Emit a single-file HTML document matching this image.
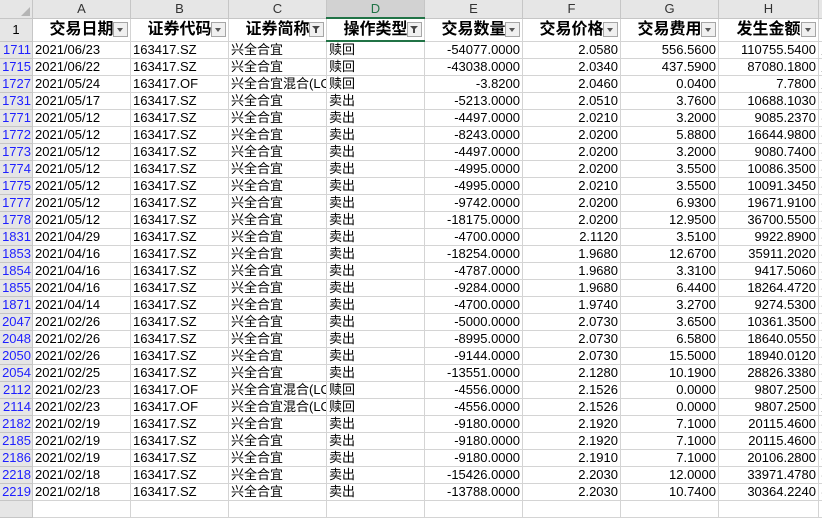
<!DOCTYPE html>
<html><head><meta charset="utf-8"><style>
body{margin:0;width:822px;height:504px;overflow:hidden;background:#fff;font-family:"Liberation Sans","Noto Sans CJK SC",sans-serif}
table{border-collapse:collapse;table-layout:fixed;position:absolute;left:-1px;top:-1px;width:839px}
td{border:1px solid #d4d4d4;padding:0 2px;font-size:13px;height:16px;line-height:16px;white-space:nowrap;overflow:hidden;color:#000}
tr.ch td{background:#e6e6e6;height:17px;text-align:center;color:#333;border-color:#c6c6c6;font-size:13px}
tr.ch td.sel{background:#d2d2d2;color:#217346;border-bottom:2px solid #217346}
tr.h td{height:21px;font-size:16px;font-weight:bold;text-align:center;position:relative}
td.rn{background:#e6e6e6;color:#1f1fff;text-align:right;padding:0 1px;border-color:#c6c6c6;font-size:13px}
tr.h td.rn{color:#000;text-align:center;font-weight:normal;font-size:13px}
td.r{text-align:right}
.fb{position:absolute;right:2px;top:3px;width:13px;height:13px;border:1px solid #a6a6a6;background:#f0f0f0}
.fb:after{content:"";position:absolute;left:3px;top:5px;border-left:3.5px solid transparent;border-right:3.5px solid transparent;border-top:4px solid #555}
.ff:after{left:2px;top:3px;border-left:4px solid transparent;border-right:4px solid transparent;border-top:4px solid #444}
.ff:before{content:"";position:absolute;left:5px;top:6px;width:2px;height:4px;background:#444}
td.d1{border-bottom:2px solid #217346}
</style></head><body>
<table>
<colgroup><col style="width:33px"><col style="width:98px"><col style="width:98px"><col style="width:98px"><col style="width:98px"><col style="width:98px"><col style="width:98px"><col style="width:98px"><col style="width:100px"><col style="width:20px"></colgroup>
<tr class="ch"><td style="position:relative"><span style="position:absolute;right:2px;bottom:2px;border-left:9px solid transparent;border-bottom:9px solid #b5b5b5"></span></td><td>A</td><td>B</td><td>C</td><td class="sel">D</td><td>E</td><td>F</td><td>G</td><td>H</td><td></td></tr>
<tr class="h"><td class="rn">1</td><td>交易日期<span class="fb"></span></td><td>证券代码<span class="fb"></span></td><td>证券简称<span class="fb ff"></span></td><td class="d1">操作类型<span class="fb ff"></span></td><td>交易数量<span class="fb"></span></td><td>交易价格<span class="fb"></span></td><td>交易费用<span class="fb"></span></td><td>发生金额<span class="fb"></span></td><td></td></tr>
<tr><td class="rn">1711</td><td>2021/06/23</td><td>163417.SZ</td><td>兴全合宜</td><td>赎回</td><td class="r">-54077.0000</td><td class="r">2.0580</td><td class="r">556.5600</td><td class="r">110755.5400</td><td>赎</td></tr>
<tr><td class="rn">1715</td><td>2021/06/22</td><td>163417.SZ</td><td>兴全合宜</td><td>赎回</td><td class="r">-43038.0000</td><td class="r">2.0340</td><td class="r">437.5900</td><td class="r">87080.1800</td><td>赎</td></tr>
<tr><td class="rn">1727</td><td>2021/05/24</td><td>163417.OF</td><td>兴全合宜混合(LOF)</td><td>赎回</td><td class="r">-3.8200</td><td class="r">2.0460</td><td class="r">0.0400</td><td class="r">7.7800</td><td>赎</td></tr>
<tr><td class="rn">1731</td><td>2021/05/17</td><td>163417.SZ</td><td>兴全合宜</td><td>卖出</td><td class="r">-5213.0000</td><td class="r">2.0510</td><td class="r">3.7600</td><td class="r">10688.1030</td><td>卖</td></tr>
<tr><td class="rn">1771</td><td>2021/05/12</td><td>163417.SZ</td><td>兴全合宜</td><td>卖出</td><td class="r">-4497.0000</td><td class="r">2.0210</td><td class="r">3.2000</td><td class="r">9085.2370</td><td>卖</td></tr>
<tr><td class="rn">1772</td><td>2021/05/12</td><td>163417.SZ</td><td>兴全合宜</td><td>卖出</td><td class="r">-8243.0000</td><td class="r">2.0200</td><td class="r">5.8800</td><td class="r">16644.9800</td><td>卖</td></tr>
<tr><td class="rn">1773</td><td>2021/05/12</td><td>163417.SZ</td><td>兴全合宜</td><td>卖出</td><td class="r">-4497.0000</td><td class="r">2.0200</td><td class="r">3.2000</td><td class="r">9080.7400</td><td>卖</td></tr>
<tr><td class="rn">1774</td><td>2021/05/12</td><td>163417.SZ</td><td>兴全合宜</td><td>卖出</td><td class="r">-4995.0000</td><td class="r">2.0200</td><td class="r">3.5500</td><td class="r">10086.3500</td><td>卖</td></tr>
<tr><td class="rn">1775</td><td>2021/05/12</td><td>163417.SZ</td><td>兴全合宜</td><td>卖出</td><td class="r">-4995.0000</td><td class="r">2.0210</td><td class="r">3.5500</td><td class="r">10091.3450</td><td>卖</td></tr>
<tr><td class="rn">1777</td><td>2021/05/12</td><td>163417.SZ</td><td>兴全合宜</td><td>卖出</td><td class="r">-9742.0000</td><td class="r">2.0200</td><td class="r">6.9300</td><td class="r">19671.9100</td><td>卖</td></tr>
<tr><td class="rn">1778</td><td>2021/05/12</td><td>163417.SZ</td><td>兴全合宜</td><td>卖出</td><td class="r">-18175.0000</td><td class="r">2.0200</td><td class="r">12.9500</td><td class="r">36700.5500</td><td>卖</td></tr>
<tr><td class="rn">1831</td><td>2021/04/29</td><td>163417.SZ</td><td>兴全合宜</td><td>卖出</td><td class="r">-4700.0000</td><td class="r">2.1120</td><td class="r">3.5100</td><td class="r">9922.8900</td><td>卖</td></tr>
<tr><td class="rn">1853</td><td>2021/04/16</td><td>163417.SZ</td><td>兴全合宜</td><td>卖出</td><td class="r">-18254.0000</td><td class="r">1.9680</td><td class="r">12.6700</td><td class="r">35911.2020</td><td>卖</td></tr>
<tr><td class="rn">1854</td><td>2021/04/16</td><td>163417.SZ</td><td>兴全合宜</td><td>卖出</td><td class="r">-4787.0000</td><td class="r">1.9680</td><td class="r">3.3100</td><td class="r">9417.5060</td><td>卖</td></tr>
<tr><td class="rn">1855</td><td>2021/04/16</td><td>163417.SZ</td><td>兴全合宜</td><td>卖出</td><td class="r">-9284.0000</td><td class="r">1.9680</td><td class="r">6.4400</td><td class="r">18264.4720</td><td>卖</td></tr>
<tr><td class="rn">1871</td><td>2021/04/14</td><td>163417.SZ</td><td>兴全合宜</td><td>卖出</td><td class="r">-4700.0000</td><td class="r">1.9740</td><td class="r">3.2700</td><td class="r">9274.5300</td><td>卖</td></tr>
<tr><td class="rn">2047</td><td>2021/02/26</td><td>163417.SZ</td><td>兴全合宜</td><td>卖出</td><td class="r">-5000.0000</td><td class="r">2.0730</td><td class="r">3.6500</td><td class="r">10361.3500</td><td>卖</td></tr>
<tr><td class="rn">2048</td><td>2021/02/26</td><td>163417.SZ</td><td>兴全合宜</td><td>卖出</td><td class="r">-8995.0000</td><td class="r">2.0730</td><td class="r">6.5800</td><td class="r">18640.0550</td><td>卖</td></tr>
<tr><td class="rn">2050</td><td>2021/02/26</td><td>163417.SZ</td><td>兴全合宜</td><td>卖出</td><td class="r">-9144.0000</td><td class="r">2.0730</td><td class="r">15.5000</td><td class="r">18940.0120</td><td>卖</td></tr>
<tr><td class="rn">2054</td><td>2021/02/25</td><td>163417.SZ</td><td>兴全合宜</td><td>卖出</td><td class="r">-13551.0000</td><td class="r">2.1280</td><td class="r">10.1900</td><td class="r">28826.3380</td><td>卖</td></tr>
<tr><td class="rn">2112</td><td>2021/02/23</td><td>163417.OF</td><td>兴全合宜混合(LOF)</td><td>赎回</td><td class="r">-4556.0000</td><td class="r">2.1526</td><td class="r">0.0000</td><td class="r">9807.2500</td><td>赎</td></tr>
<tr><td class="rn">2114</td><td>2021/02/23</td><td>163417.OF</td><td>兴全合宜混合(LOF)</td><td>赎回</td><td class="r">-4556.0000</td><td class="r">2.1526</td><td class="r">0.0000</td><td class="r">9807.2500</td><td>赎</td></tr>
<tr><td class="rn">2182</td><td>2021/02/19</td><td>163417.SZ</td><td>兴全合宜</td><td>卖出</td><td class="r">-9180.0000</td><td class="r">2.1920</td><td class="r">7.1000</td><td class="r">20115.4600</td><td>卖</td></tr>
<tr><td class="rn">2185</td><td>2021/02/19</td><td>163417.SZ</td><td>兴全合宜</td><td>卖出</td><td class="r">-9180.0000</td><td class="r">2.1920</td><td class="r">7.1000</td><td class="r">20115.4600</td><td>卖</td></tr>
<tr><td class="rn">2186</td><td>2021/02/19</td><td>163417.SZ</td><td>兴全合宜</td><td>卖出</td><td class="r">-9180.0000</td><td class="r">2.1910</td><td class="r">7.1000</td><td class="r">20106.2800</td><td>卖</td></tr>
<tr><td class="rn">2218</td><td>2021/02/18</td><td>163417.SZ</td><td>兴全合宜</td><td>卖出</td><td class="r">-15426.0000</td><td class="r">2.2030</td><td class="r">12.0000</td><td class="r">33971.4780</td><td>卖</td></tr>
<tr><td class="rn">2219</td><td>2021/02/18</td><td>163417.SZ</td><td>兴全合宜</td><td>卖出</td><td class="r">-13788.0000</td><td class="r">2.2030</td><td class="r">10.7400</td><td class="r">30364.2240</td><td>卖</td></tr>
<tr><td class="rn"></td><td></td><td></td><td></td><td></td><td></td><td></td><td></td><td></td><td></td></tr>
</table>
</body></html>
